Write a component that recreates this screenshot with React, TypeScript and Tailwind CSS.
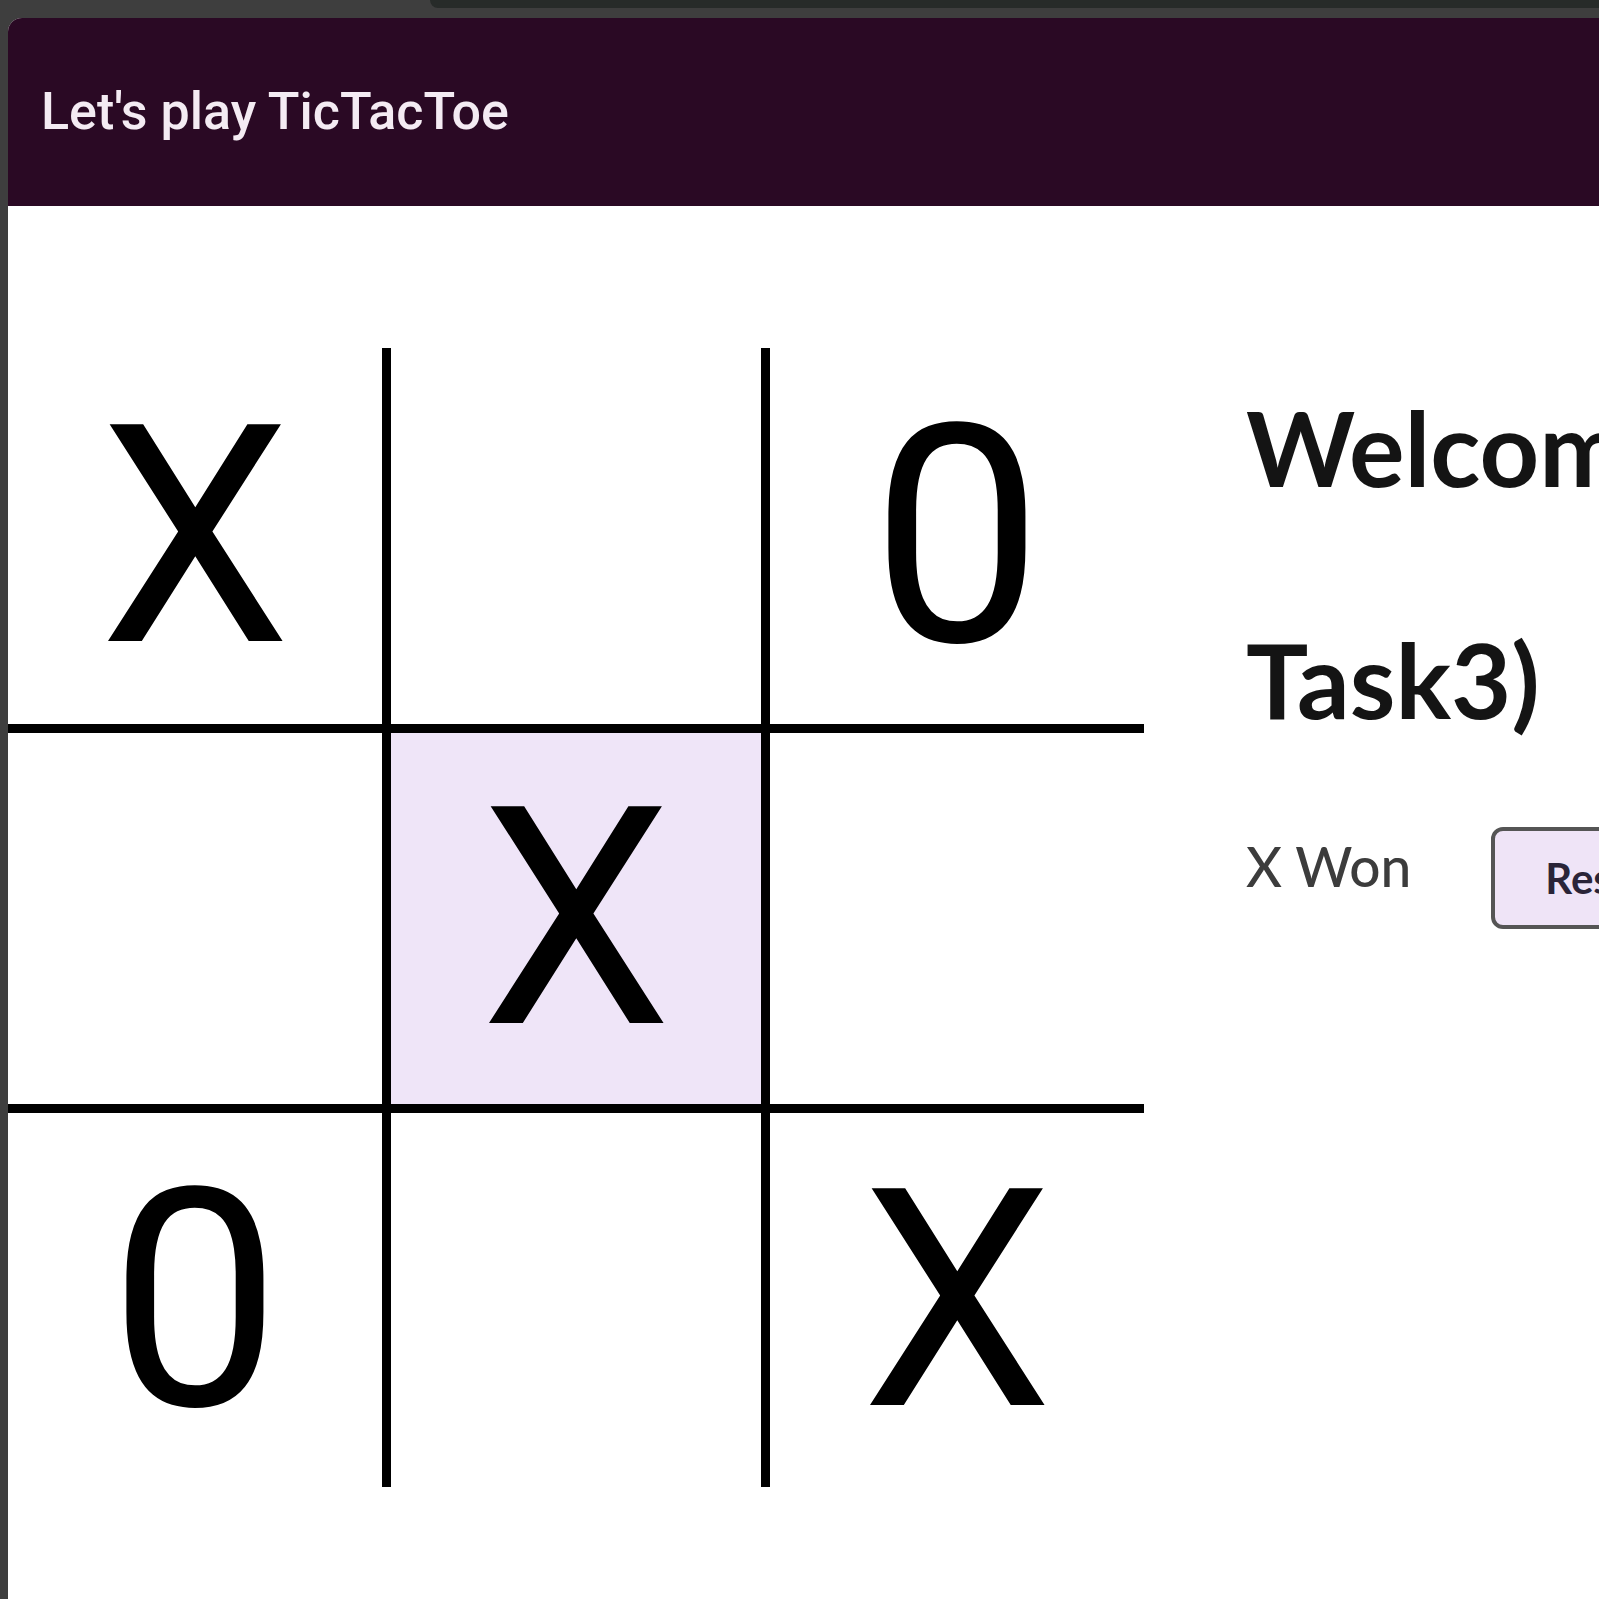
import { useState } from "react";

const start = ["X", "", "0", "", "X", "", "0", "", "X"];

export default function App() {
  const [board] = useState(start);

  return (
    <div className="w-[1599px] h-[1599px] overflow-hidden bg-[#3e3e3e] flex flex-col">
      <div className="h-[18px] flex shrink-0">
        <div className="w-[430px]" />
        <div className="flex-1 h-[8px] bg-[#272b29] rounded-bl-[14px]" />
      </div>
      <div className="flex-1 ml-[8px] bg-white rounded-tl-[14px] overflow-hidden flex flex-col">
        <header className="h-[188px] shrink-0 bg-[#2a0924] flex items-center pl-[33px]">
          <h1 className="text-[52px] leading-none font-medium text-[#f4ebf3] font-['Roboto',sans-serif] whitespace-nowrap">
            Let's play TicTacToe
          </h1>
        </header>
        <main className="flex items-start">
          <div className="mt-[142px] grid grid-cols-[383px_379px_374px] grid-rows-[385px_380px_374px] shrink-0 font-['Roboto',sans-serif]">
            {board.map((cell, i) => (
              <div
                key={i}
                className={
                  "flex items-center justify-center border-black " +
                  (i % 3 < 2 ? "border-r-[9px] " : "") +
                  (i < 6 ? "border-b-[9px] " : "") +
                  (i === 4 ? "bg-[#efe5f8]" : "bg-white")
                }
              >
                <span className="text-[305px] leading-none text-black">{cell}</span>
              </div>
            ))}
          </div>
          <div className="pl-[102px] pt-[125px] font-['Lato',sans-serif] shrink-0">
            <h2 className="text-[104px] leading-[232px] font-bold text-[#141414] whitespace-nowrap">
              Welcome to TicTacToe (<br />
              Task3)
            </h2>
            <div className="mt-[30px] flex items-center">
              <p className="text-[55px] font-medium text-[#3c3c3c] mb-[24px] whitespace-nowrap">X Won</p>
              <button className="ml-[80px] h-[102px] pl-[50px] pr-[54px] rounded-[12px] border-[4px] border-[#555] bg-[#efe4f7] text-[42px] font-bold text-[#2a2438] whitespace-nowrap">
                Restart
              </button>
            </div>
          </div>
        </main>
      </div>
    </div>
  );
}
